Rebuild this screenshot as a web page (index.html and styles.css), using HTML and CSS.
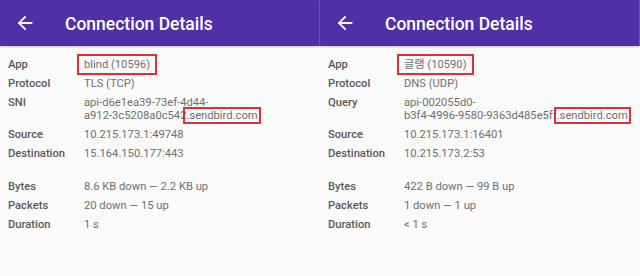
FILE: index.html
```html
<!DOCTYPE html>
<html lang="ko">
<head>
    <meta charset="UTF-8">
    <meta name="viewport" content="width=device-width, initial-scale=1.0">
    <title>Connection Details</title>
    <link rel="stylesheet" href="styles.css">
</head>
<body>

<div class="screens">
    <div class="panel">
        <div class="appbar">
            <svg class="back" width="22" height="22" viewBox="0 0 24 24"><path d="M20 11H7.83l5.59-5.59L12 4l-8 8 8 8 1.41-1.41L7.83 13H20v-2z" fill="#fff"/></svg>
            <span class="title">Connection Details</span>
        </div>
        <div class="details">
            <div class="row"><span class="label">App</span><span class="value"><span class="mark-app">blind (10596)</span></span></div>
            <div class="row"><span class="label">Protocol</span><span class="value">TLS (TCP)</span></div>
            <div class="row"><span class="label">SNI</span><span class="value">api-d6e1ea39-73ef-4d44-<br>a912-3c5208a0c542<span class="mark-host">.sendbird.com</span></span></div>
            <div class="row"><span class="label">Source</span><span class="value">10.215.173.1:49748</span></div>
            <div class="row"><span class="label">Destination</span><span class="value">15.164.150.177:443</span></div>
            <div class="spacer"></div>
            <div class="row"><span class="label">Bytes</span><span class="value">8.6 KB down — 2.2 KB up</span></div>
            <div class="row"><span class="label">Packets</span><span class="value">20 down — 15 up</span></div>
            <div class="row"><span class="label">Duration</span><span class="value">1 s</span></div>
        </div>
    </div>

    <div class="panel">
        <div class="appbar">
            <svg class="back" width="22" height="22" viewBox="0 0 24 24"><path d="M20 11H7.83l5.59-5.59L12 4l-8 8 8 8 1.41-1.41L7.83 13H20v-2z" fill="#fff"/></svg>
            <span class="title">Connection Details</span>
        </div>
        <div class="details">
            <div class="row"><span class="label">App</span><span class="value"><span class="mark-app">글램 (10590)</span></span></div>
            <div class="row"><span class="label">Protocol</span><span class="value">DNS (UDP)</span></div>
            <div class="row"><span class="label">Query</span><span class="value">api-002055d0-<br>b3f4-4996-9580-9363d485e5ff<span class="mark-host">.sendbird.com</span></span></div>
            <div class="row"><span class="label">Source</span><span class="value">10.215.173.1:16401</span></div>
            <div class="row"><span class="label">Destination</span><span class="value">10.215.173.2:53</span></div>
            <div class="spacer"></div>
            <div class="row"><span class="label">Bytes</span><span class="value">422 B down — 99 B up</span></div>
            <div class="row"><span class="label">Packets</span><span class="value">1 down — 1 up</span></div>
            <div class="row"><span class="label">Duration</span><span class="value">&lt; 1 s</span></div>
        </div>
    </div>
</div>

</body>
</html>
```

FILE: styles.css
```css
body {
    margin: 0;
    font-family: Roboto, "Noto Sans CJK KR", sans-serif;
    background-color: #fafafa;
}
.screens {
    display: flex;
    height: 276px;
}
.panel {
    width: 320px;
    background-color: #fafafa;
}
.appbar {
    display: flex;
    align-items: center;
    height: 46px;
    background-color: #5030a6;
    border-right: 1px solid #7355c4;
    box-shadow: 0 1px 2px rgba(0, 0, 0, 0.2);
}
.back {
    margin-left: 14px;
    margin-right: 29px;
}
.title {
    color: white;
    font-size: 17.5px;
    font-weight: 500;
    padding-top: 2px;
}
.details {
    padding: 12px 0 0 8px;
}
.row {
    display: flex;
    font-size: 11.2px;
    line-height: 13px;
    margin-bottom: 6px;
}
.label {
    width: 76px;
    flex-shrink: 0;
    color: #595959;
    font-weight: 500;
}
.value {
    color: #707070;
    white-space: nowrap;
}
.spacer {
    height: 14px;
}
.mark-app {
    border: 2px solid #d9323e;
    padding: 2px 5px;
    margin-left: -7px;
}
.mark-host {
    border: 2px solid #d9323e;
    padding: 0 1px;
    margin-left: -3px;
}
```
